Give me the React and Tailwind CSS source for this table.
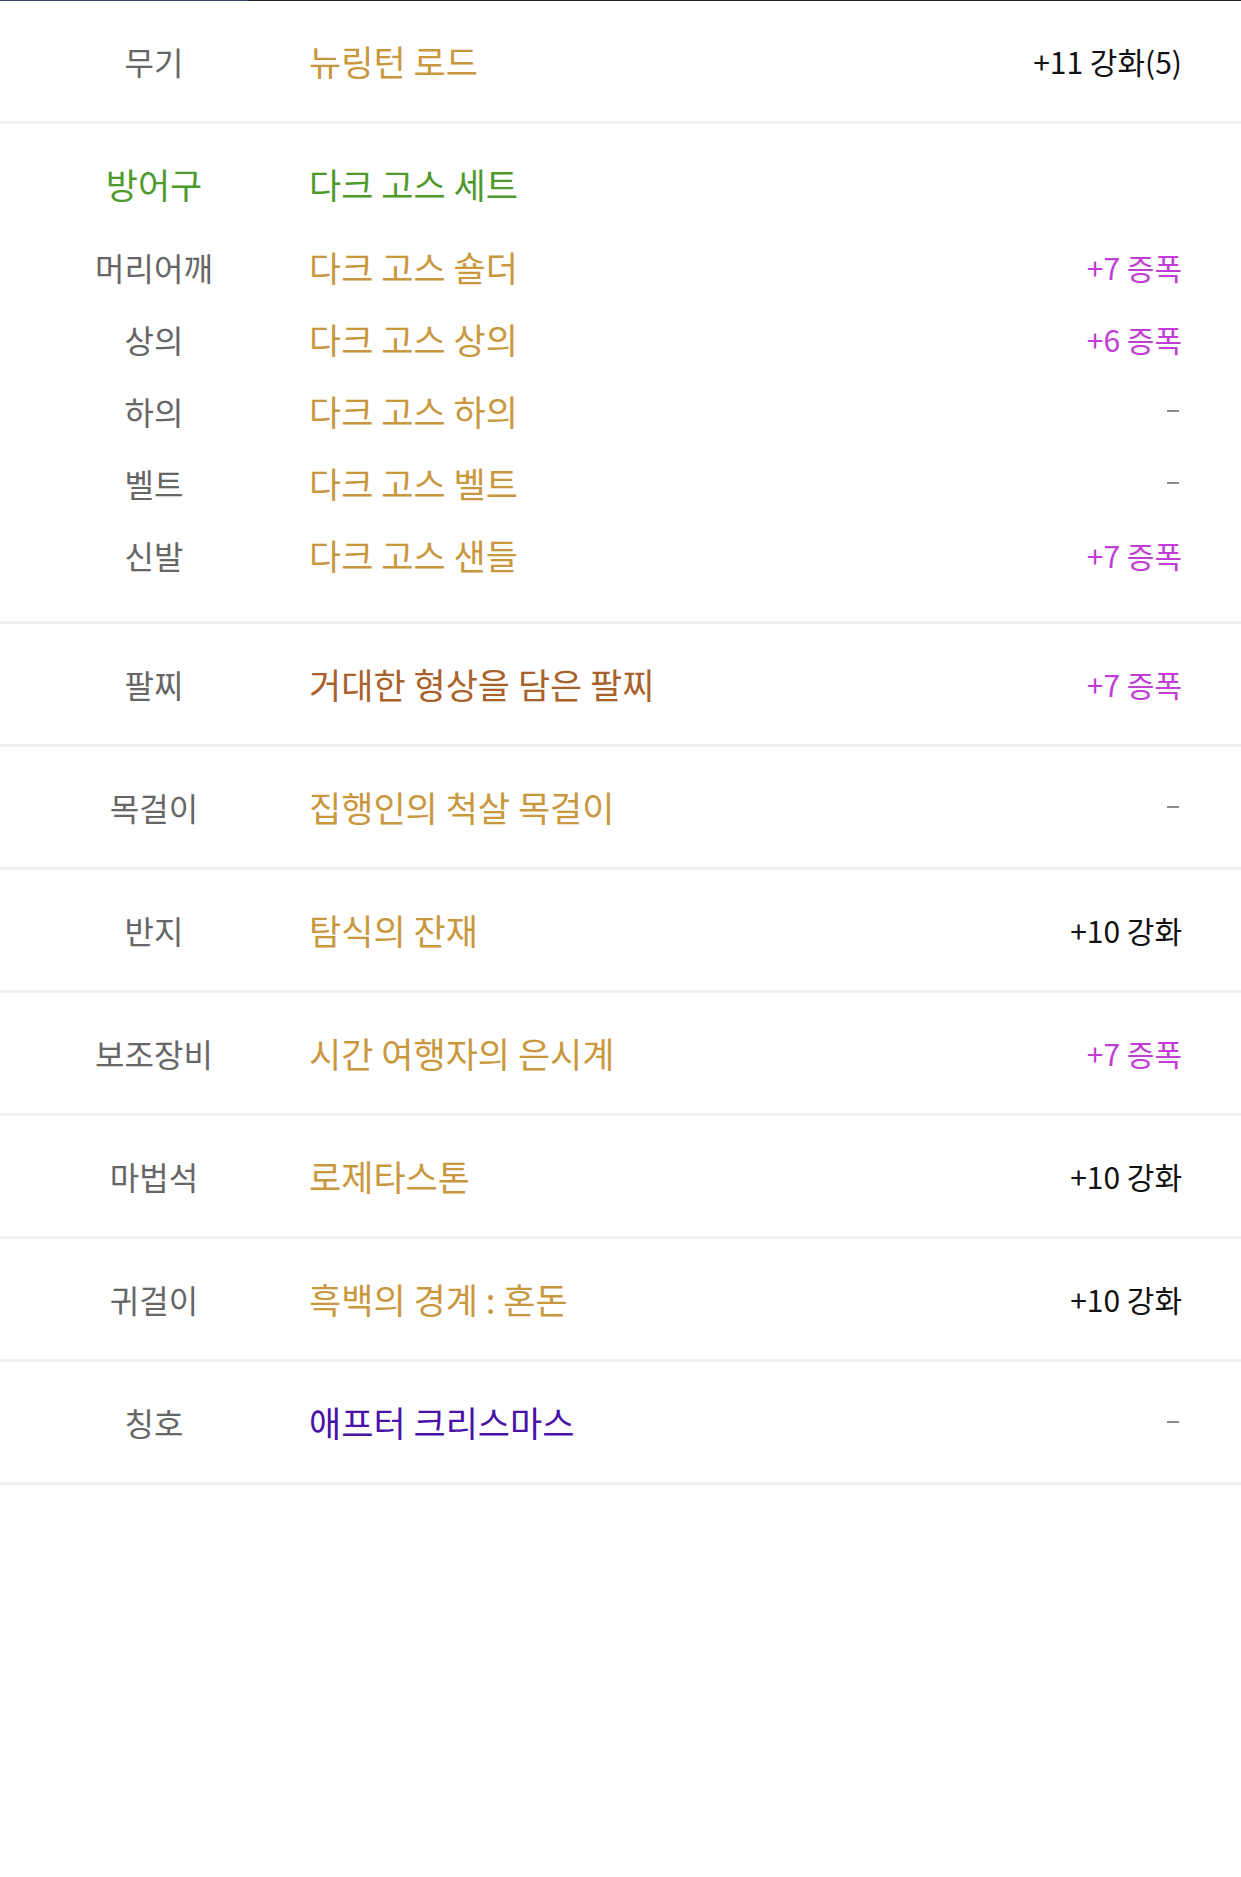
const font = { fontFamily: '"Noto Sans CJK KR", "Noto Sans", sans-serif' };

const armor = [
  { slot: '머리어깨', name: '다크 고스 숄더', value: '+7 증폭', type: 'amp' },
  { slot: '상의', name: '다크 고스 상의', value: '+6 증폭', type: 'amp' },
  { slot: '하의', name: '다크 고스 하의', value: null },
  { slot: '벨트', name: '다크 고스 벨트', value: null },
  { slot: '신발', name: '다크 고스 샌들', value: '+7 증폭', type: 'amp' },
];

const rows = [
  { slot: '팔찌', name: '거대한 형상을 담은 팔찌', color: 'text-[#a9612b]', value: '+7 증폭', type: 'amp' },
  { slot: '목걸이', name: '집행인의 척살 목걸이', color: 'text-[#c9973e]', value: null },
  { slot: '반지', name: '탐식의 잔재', color: 'text-[#c9973e]', value: '+10 강화', type: 'reinforce' },
  { slot: '보조장비', name: '시간 여행자의 은시계', color: 'text-[#c9973e]', value: '+7 증폭', type: 'amp' },
  { slot: '마법석', name: '로제타스톤', color: 'text-[#c9973e]', value: '+10 강화', type: 'reinforce' },
  { slot: '귀걸이', name: '흑백의 경계 : 혼돈', color: 'text-[#c9973e]', value: '+10 강화', type: 'reinforce' },
  { slot: '칭호', name: '애프터 크리스마스', color: 'text-[#4a12a6]', value: null },
];

function Value({ value, type }) {
  if (!value) {
    return <span className="inline-block w-[12px] h-[2px] bg-[#8a8a8a] mr-[3px]" />;
  }
  return (
    <span className={`text-[30px] leading-none ${type === 'amp' ? 'text-[#c23dd6]' : 'text-[#111]'}`}>
      {value}
    </span>
  );
}

function ItemRow({ slot, name, color, value, type, h = 'h-[120px]' }) {
  return (
    <div className={`flex items-center ${h}`}>
      <div className="w-[308px] shrink-0 text-center text-[32px] text-[#666]">{slot}</div>
      <div className={`flex-1 pl-[1px] text-[35px] ${color}`}>{name}</div>
      <div className="pr-[59px] flex items-center">
        <Value value={value} type={type} />
      </div>
    </div>
  );
}

export default function App() {
  return (
    <div className="w-[1241px] min-h-[1877px] bg-white" style={font}>
      <div className="flex h-[1px]">
        <div className="w-[248px] bg-[#3b4672]" />
        <div className="flex-1 bg-[#222]" />
      </div>

      <div className="border-b-[3px] border-[#f1f1f1]">
        <ItemRow slot="무기" name="뉴링턴 로드" color="text-[#c9973e]" value="+11 강화(5)" type="reinforce" />
      </div>

      <div className="border-b-[3px] border-[#f1f1f1] pt-[24px] pb-[30px]">
        <div className="flex items-center h-[72px] mb-[11px]">
          <div className="w-[308px] shrink-0 text-center text-[35px] text-[#4f9a2c]">방어구</div>
          <div className="flex-1 pl-[1px] text-[35px] text-[#4f9a2c]">다크 고스 세트</div>
        </div>
        {armor.map((r) => (
          <ItemRow key={r.slot} {...r} color="text-[#c9973e]" h="h-[72px]" />
        ))}
      </div>

      {rows.map((r) => (
        <div key={r.slot} className="border-b-[3px] border-[#f1f1f1]">
          <ItemRow {...r} />
        </div>
      ))}
    </div>
  );
}
